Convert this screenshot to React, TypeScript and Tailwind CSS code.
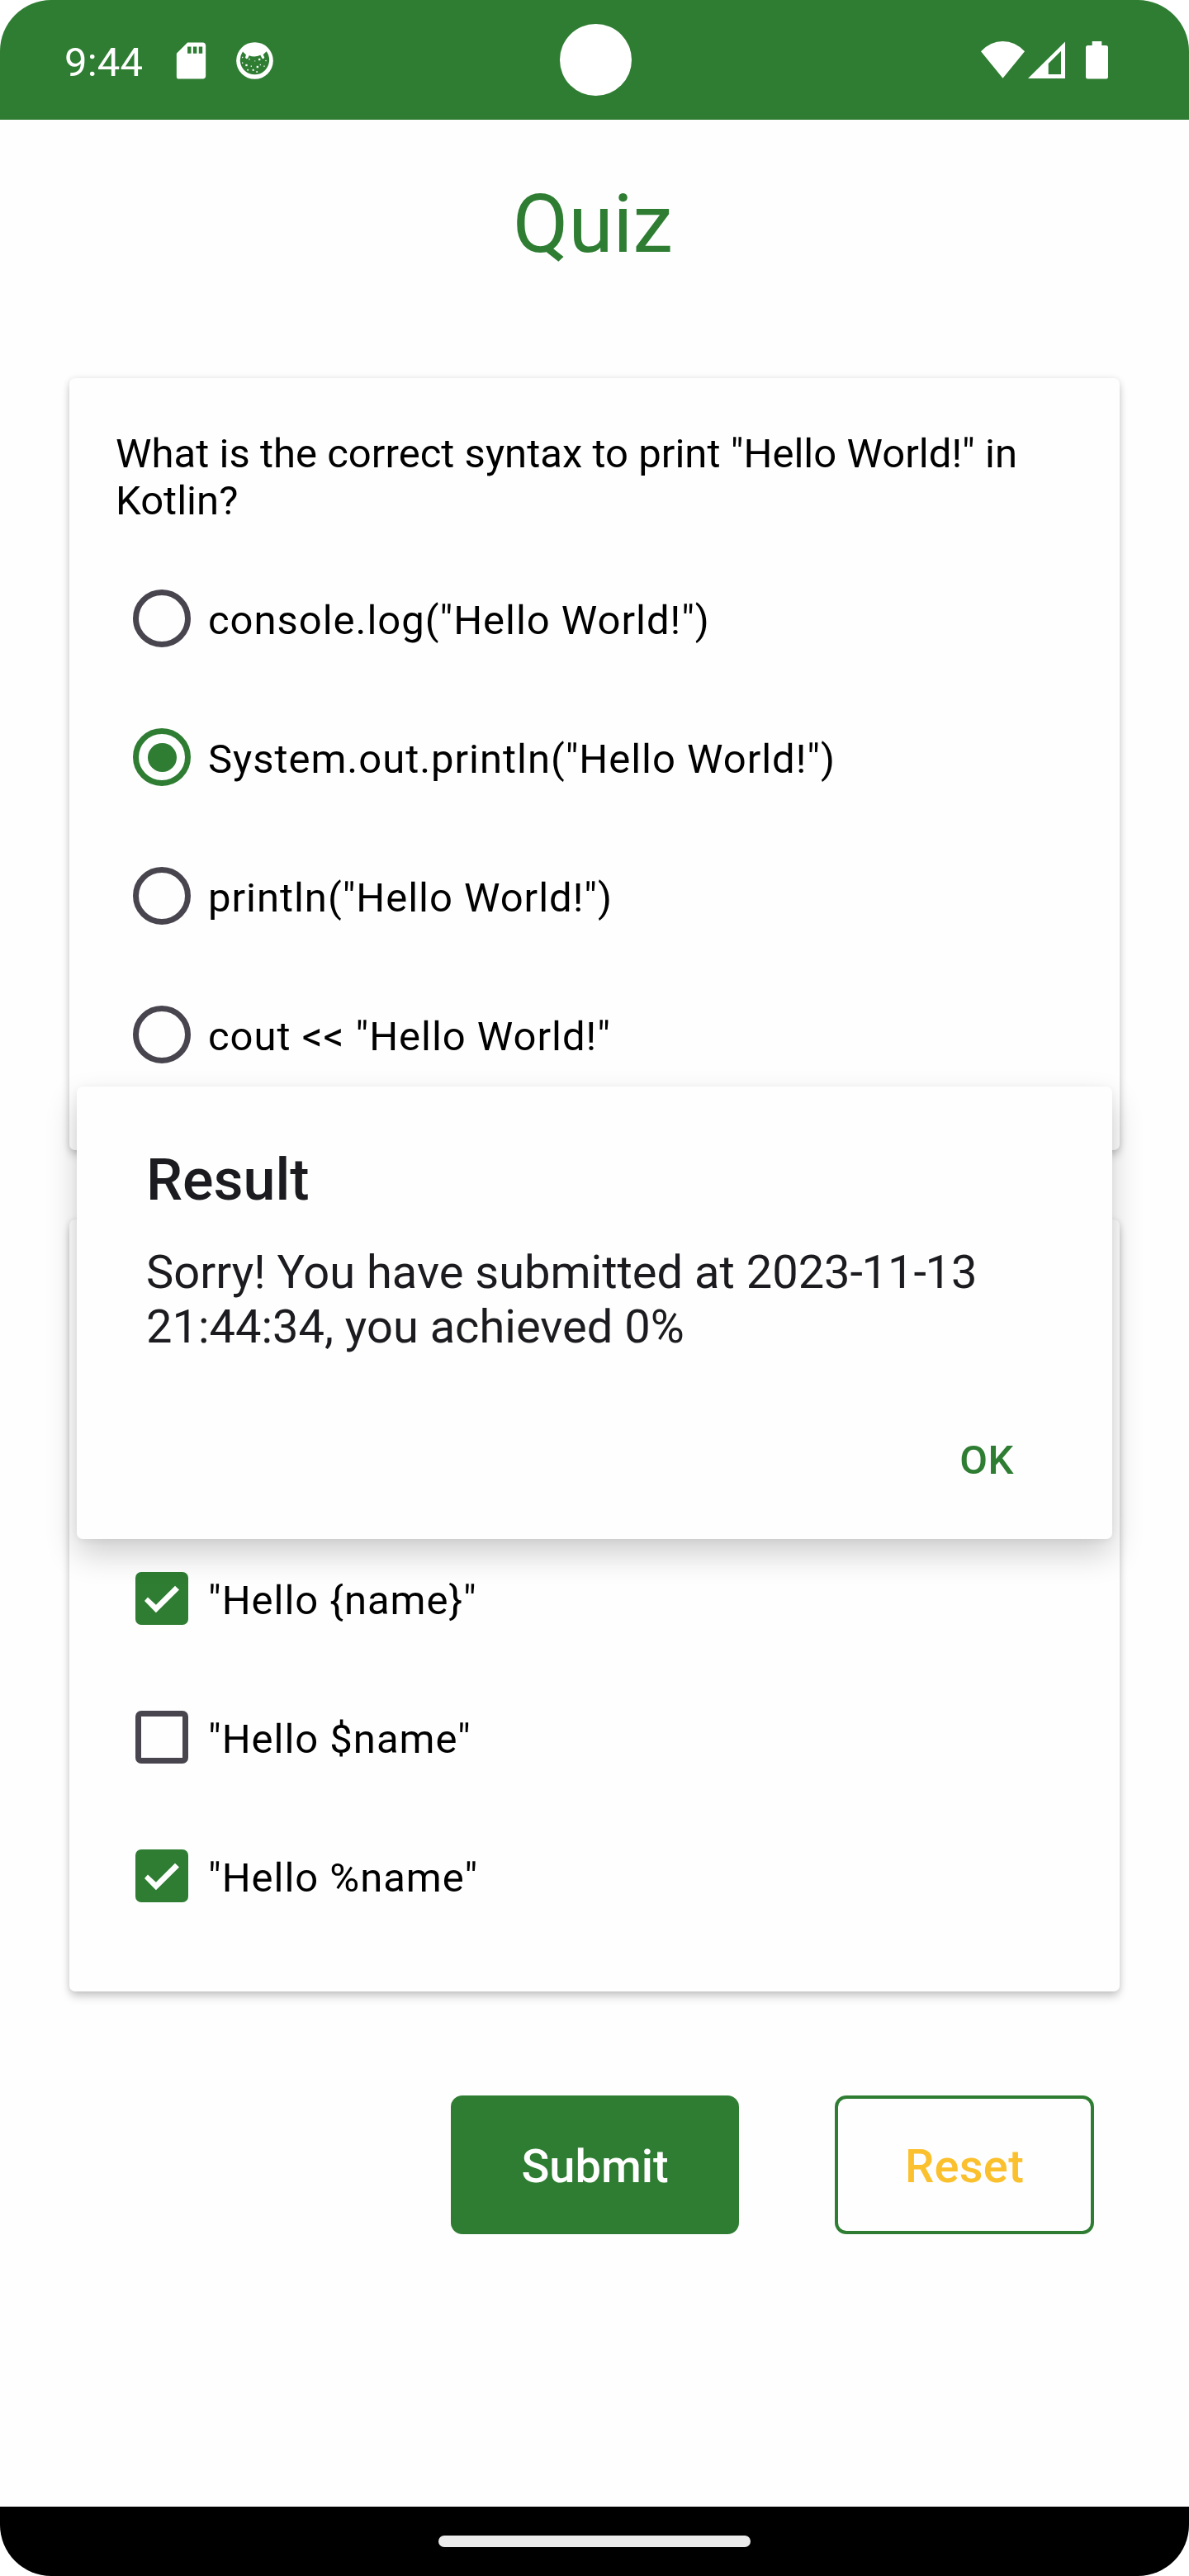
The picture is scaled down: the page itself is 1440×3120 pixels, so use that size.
import type { ReactNode } from "react";

function StatusBar() {
  return (
    <header className="relative flex h-[145px] shrink-0 items-start justify-between bg-[#2E7D32] text-white">
      <div className="flex items-start pl-[78px] pt-[47px]">
        <span className="w-[127px] text-[49px] leading-[57px] tracking-[0.2px]">9:44</span>
        <svg className="size-[53px]" viewBox="0 0 24 24" fill="currentColor">
          <path d="M18.4 2H10L4 8v12.8c0 .7.5 1.2 1.2 1.2h13.2c.9 0 1.600-.7 1.600-1.600V3.600c0-.9-.7-1.600-1.600-1.600zM12 8h-2V4.300h2V8zm3.100 0h-2V4.300h2V8zm3.100 0h-2V4.300h2V8z" />
        </svg>
        <svg className="ml-[28px] mt-1 size-[45px]" viewBox="48 34 135 134" fill="#fff">
          <circle cx="115.500" cy="101" r="67" />
          <path
            fill="#2E7D32"
            d="M72 68 L84 80 L81 89 Q84 97 90 93 L95 82 Q115 90 136 81 L142 92 Q147 97 151 90 L146 79 L158 67 A53 53 0 1 1 72 68Z"
          />
          <rect x="94" y="93" width="4" height="5" />
          <rect x="129" y="93" width="7" height="7" />
          <rect x="154" y="99" width="4" height="4" />
          <rect x="114" y="100" width="4" height="4" opacity=".6" />
          <rect x="69" y="87" width="4" height="4" />
          <rect x="69" y="107" width="4" height="4" />
          <rect x="82" y="114" width="7" height="7" />
          <rect x="101" y="119" width="4" height="4" />
          <rect x="122" y="120" width="7" height="7" />
          <rect x="134" y="114" width="4" height="4" />
          <rect x="148" y="119" width="4" height="4" />
          <rect x="88" y="132" width="5" height="5" />
          <rect x="107" y="132" width="6" height="6" />
          <rect x="121" y="139" width="5" height="5" />
        </svg>
      </div>
      <div className="absolute left-[677.5px] top-[29px] size-[87px] rounded-full bg-white" />
      <div className="flex items-start pr-[98px] pt-[50px]">
        <svg className="h-[45px] w-[53px]" viewBox="0 0 53 45" fill="currentColor">
          <path d="M26.500 44.800 L0 12.200 Q11.500 0 26.500 0 Q41.500 0 53 12.200Z" />
        </svg>
        <svg className="ml-1 h-[45px] w-[45px]" viewBox="0 0 45 45" fill="currentColor" fillRule="evenodd">
          <path d="M0 45 L45 0.500 V45Z M24.700 27 V40 H40 V11.700Z" />
        </svg>
        <svg className="ml-[25px] h-[46px] w-[27px]" viewBox="0 0 27 46" fill="currentColor">
          <path d="M7.700 0h11.600v5H24.500a2.500 2.500 0 0 1 2.500 2.500V43a2.500 2.500 0 0 1-2.500 2.500H2.500A2.500 2.500 0 0 1 0 43V7.500A2.500 2.500 0 0 1 2.500 5h5.200z" />
        </svg>
      </div>
    </header>
  );
}

function Card({ className, children }: { className: string; children: ReactNode }) {
  return (
    <section
      className={`flex flex-col rounded-[7px] bg-[#fefefe] pb-14 pl-14 pr-14 shadow-[0_7px_12px_-1px_rgba(0,0,0,0.18),0_1px_9px_rgba(0,0,0,0.12)] ${className}`}
    >
      {children}
    </section>
  );
}

function Option({ control, label }: { control: ReactNode; label: string }) {
  return (
    <label className="flex h-[168px] items-center">
      <span className="flex w-28 justify-center">{control}</span>
      <span className="pt-1 text-[49px] leading-[57px] tracking-[0.97px]">{label}</span>
    </label>
  );
}

function Radio({ checked = false }: { checked?: boolean }) {
  return checked ? (
    <span className="flex size-[70px] items-center justify-center rounded-full border-[7px] border-[#2E7D32]">
      <span className="size-[35px] rounded-full bg-[#2E7D32]" />
    </span>
  ) : (
    <span className="size-[70px] rounded-full border-[7px] border-[#49454F]" />
  );
}

function Checkbox({ checked = false }: { checked?: boolean }) {
  return checked ? (
    <span className="size-16 rounded-[7px] bg-[#2E7D32]">
      <svg className="size-16" viewBox="0 0 64 64" fill="#fefefe">
        <path d="M11 35 L15 30.600 L24.900 39.700 L48 16.700 L53 21.500 L24.900 49.300Z" />
      </svg>
    </span>
  ) : (
    <span className="size-16 rounded-[7px] border-[7px] border-[#49454F]" />
  );
}

function ResultDialog() {
  return (
    <div
      role="dialog"
      className="absolute left-[93px] top-[1316px] flex h-[548px] w-[1254px] flex-col rounded-[7px] bg-[#fefefe] pl-[84px] pr-[119px] pt-[72px] text-[#1C1B1F] shadow-[0_18px_38px_rgba(0,0,0,0.19),0_2px_8px_rgba(0,0,0,0.06)]"
    >
      <h2 className="text-[70px] font-medium leading-[82px]">Result</h2>
      <p className="mt-[38px] whitespace-nowrap text-[56px] leading-[66px]">
        Sorry! You have submitted at 2023<span className="tracking-[-1.5px]">-</span>11
        <span className="tracking-[-1.5px]">-</span>13
        <br />
        21:44:34, you achieved 0%
      </p>
      <button className="mt-[100px] self-end text-[49px] font-medium leading-[57px] tracking-[0.5px] text-[#2E7D32]">
        OK
      </button>
    </div>
  );
}

export default function App() {
  return (
    <div className="bg-white">
      <div className="relative flex h-[3120px] w-[1440px] flex-col overflow-hidden rounded-[62px] bg-[#fefefe] font-['Roboto',sans-serif] text-black">
        <StatusBar />
        <main className="flex flex-1 flex-col px-[84px]">
          <h1 className="mt-[69px] text-center text-[98px] leading-[115px] text-[#2E7D32]">
            <span className="pr-1">Quiz</span>
          </h1>
          <Card className="mt-[129px] pt-[63px]">
            <p className="mb-[30px] whitespace-nowrap text-[49px] leading-[57px] tracking-[0.03px]">
              What is the correct syntax to print "Hello World!" in
              <br />
              Kotlin?
            </p>
            <Option control={<Radio />} label={'console.log("Hello World!")'} />
            <Option control={<Radio checked />} label={'System.out.println("Hello World!")'} />
            <Option control={<Radio />} label={'println("Hello World!")'} />
            <Option control={<Radio />} label={'cout << "Hello World!"'} />
          </Card>
          <Card className="mt-[84px] pt-[375px]">
            <Option control={<Checkbox checked />} label={'"Hello {name}"'} />
            <Option control={<Checkbox />} label={'"Hello $name"'} />
            <Option control={<Checkbox checked />} label={'"Hello %name"'} />
          </Card>
          <div className="mt-[126px] flex justify-end gap-[116px] pr-[31px]">
            <button className="h-[168px] w-[349px] rounded-[14px] bg-[#2E7D32] pt-1 text-[56px] font-medium text-white">
              Submit
            </button>
            <button className="h-[168px] w-[314px] rounded-[14px] border-4 border-[#2E7D32] pt-1 text-[56px] font-medium tracking-[0.3px] text-[#FBC02D]">
              Reset
            </button>
          </div>
        </main>
        <footer className="flex h-[84px] shrink-0 justify-center bg-black pt-[35px]">
          <div className="h-[14px] w-[378px] rounded-full bg-[#ebebeb]" />
        </footer>
        <ResultDialog />
      </div>
    </div>
  );
}
